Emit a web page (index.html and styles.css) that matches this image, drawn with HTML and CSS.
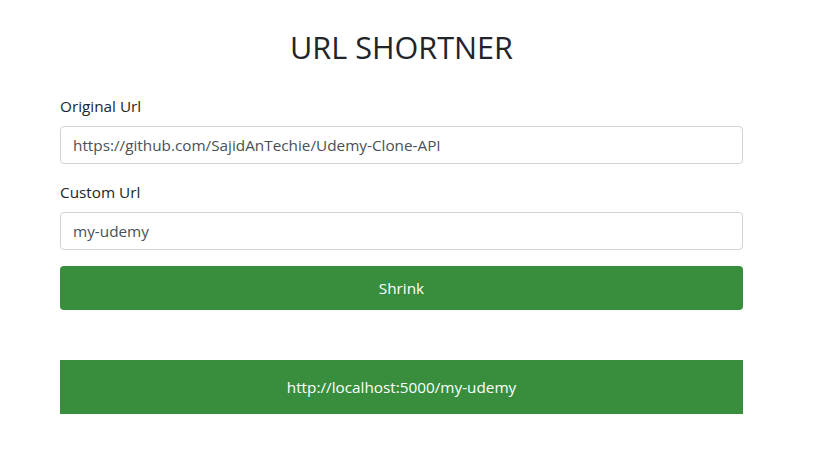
FILE: index.html
```html
<!DOCTYPE html>
<html>
<head>
<meta charset="utf-8">
<link rel="stylesheet" href="styles.css">
</head>
<body>
<main class="container">
  <h2 class="title">URL SHORTNER</h2>
  <form class="form">
    <div class="form-group">
      <label class="label">Original Url</label>
      <input class="input" type="text" value="https://github.com/SajidAnTechie/Udemy-Clone-API">
    </div>
    <div class="form-group">
      <label class="label">Custom Url</label>
      <input class="input" type="text" value="my-udemy">
    </div>
    <button class="btn" type="button">Shrink</button>
  </form>
  <div class="result">http://localhost:5000/my-udemy</div>
</main>
</body>
</html>
```
FILE: styles.css
```css
* { box-sizing: border-box; }
html, body { margin: 0; padding: 0; background: #fff; }
body {
  font-family: "Open Sans", "Noto Sans", sans-serif;
  font-size: 15.3px;
  line-height: 24px;
  color: #212529;
}
.container {
  width: 683px;
  margin-left: 60px;
  padding-top: 28px;
}
.title {
  margin: 0 0 28px;
  font-weight: 400;
  font-size: 30.6px;
  line-height: 38px;
  text-align: center;
}
.form-group { display: flex; flex-direction: column; margin-bottom: 16px; }
.label { display: block; margin-bottom: 8px; height: 24px; }
.input {
  height: 38px;
  width: 100%;
  padding: 0 12px;
  border: 1px solid #ced4da;
  border-radius: 4px;
  font: inherit;
  color: #495057;
  background: #fff;
  outline: none;
}
.btn {
  display: block;
  width: 100%;
  height: 44px;
  border: 0;
  border-radius: 4px;
  background: #388e3c;
  color: #fff;
  font: inherit;
  cursor: pointer;
}
.result {
  margin-top: 50px;
  height: 54px;
  background: #388e3c;
  color: #fff;
  display: flex;
  align-items: center;
  justify-content: center;
}
```
